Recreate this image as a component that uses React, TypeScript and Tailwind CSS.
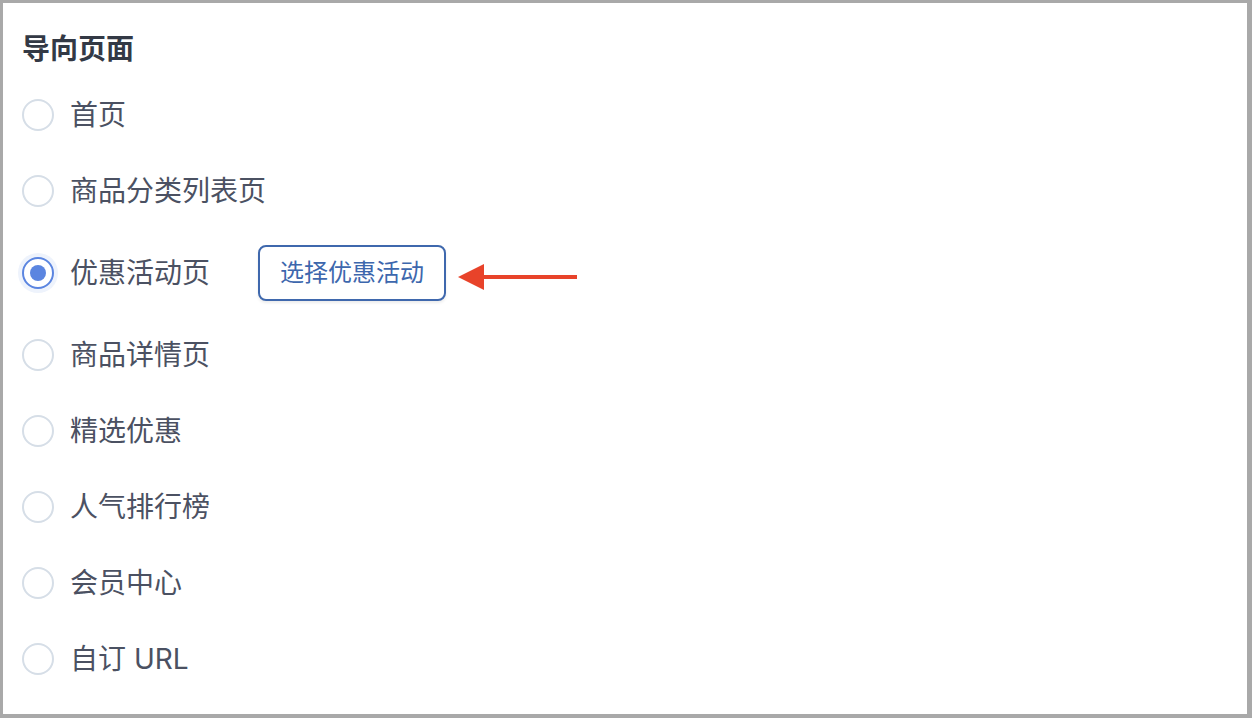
import * as React from "react";

const OPTIONS = ["首页", "商品分类列表页", "优惠活动页", "商品详情页", "精选优惠", "人气排行榜", "会员中心", "自订 URL"];
const SELECTED = "优惠活动页";

function Radio({ checked }: { checked: boolean }) {
  if (checked) {
    return (
      <span className="flex items-center justify-center w-[40px] h-[40px] -mx-[4px] rounded-full bg-[#eef3fc]">
        <span className="flex items-center justify-center w-[32px] h-[32px] rounded-full border-2 border-[#5b85e0] bg-white">
          <span className="w-[16px] h-[16px] rounded-full bg-[#5b85e0]" />
        </span>
      </span>
    );
  }
  return <span className="w-[32px] h-[32px] rounded-full border-2 border-[#d6dee7] bg-white" />;
}

export default function App() {
  return (
    <div
      className="w-[1252px] h-[718px] bg-white border-t-[3px] border-l-[3px] border-r-[5px] border-b-[4px] border-[#a9a9a9] pl-[19px] pt-[26px]"
      style={{ fontFamily: 'Inter, "Noto Sans CJK SC", sans-serif' }}
    >
      <h1 className="text-[28px] leading-[40px] font-bold text-[#333945]">导向页面</h1>
      <div className="mt-[8px] flex flex-col">
        {OPTIONS.map(o => {
          const checked = o === SELECTED;
          return (
            <label key={o} className={`flex items-center ${checked ? "h-[88px]" : "h-[76px]"}`}>
              <Radio checked={checked} />
              <span className="ml-[16px] text-[28px] leading-[40px] text-[#4b5162]">{o}</span>
              {checked && (
                <>
                  <button
                    type="button"
                    className="ml-[48px] w-[188px] h-[56px] rounded-[8px] border-2 border-[#3f68ad] bg-white text-[24px] text-[#3d67ad] shadow-[0_2px_3px_rgba(0,0,0,0.08)]"
                  >
                    选择优惠活动
                  </button>
                  <svg width="120" height="28" viewBox="0 0 120 28" className="ml-[12px] mt-[8px]">
                    <path d="M0 14 L26 1 L26 27 Z" fill="#e8432a" />
                    <rect x="24" y="12" width="95" height="4" fill="#e8432a" />
                  </svg>
                </>
              )}
            </label>
          );
        })}
      </div>
    </div>
  );
}
